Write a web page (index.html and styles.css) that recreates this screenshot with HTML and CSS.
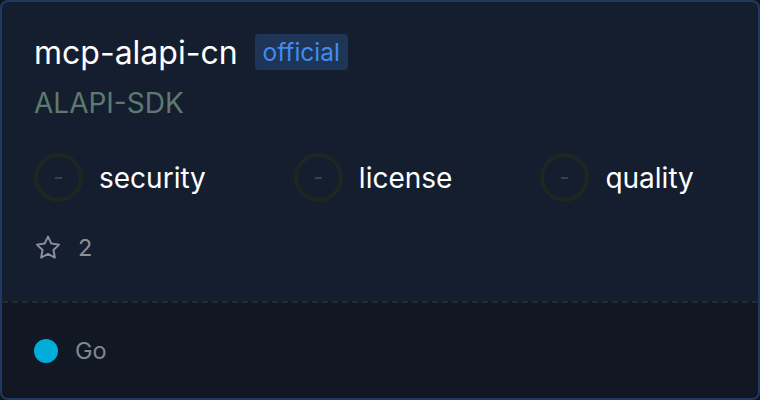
FILE: index.html
```html
<!DOCTYPE html>
<html lang="en">
  <head>
    <meta charset="UTF-8" />
    <meta name="viewport" content="width=device-width, initial-scale=1.0" />
    <title>mcp-alapi-cn</title>
    <link rel="stylesheet" href="styles.css">
  </head>
  <body>
    <div class="card">
      <div class="card-main">
        <div class="title-row">
          <h1 class="title">mcp-alapi-cn</h1>
          <span class="badge">official</span>
        </div>
        <div class="owner">ALAPI-SDK</div>

        <div class="scores">
          <div class="score">
            <span class="ring"><span class="dash"></span></span>
            <span class="score-label">security</span>
          </div>
          <div class="score">
            <span class="ring"><span class="dash"></span></span>
            <span class="score-label">license</span>
          </div>
          <div class="score">
            <span class="ring"><span class="dash"></span></span>
            <span class="score-label">quality</span>
          </div>
        </div>

        <div class="stars">
          <svg class="star-icon" width="28" height="28" viewBox="0 0 24 24" fill="none" stroke="currentColor" stroke-width="1.7" stroke-linejoin="round">
            <path d="M12 2.2l2.9 6 6.6.9-4.8 4.6 1.2 6.5L12 17.1l-5.9 3.1 1.2-6.5-4.8-4.6 6.6-.9z" />
          </svg>
          <span class="star-count">2</span>
        </div>
      </div>

      <div class="card-footer">
        <span class="lang-dot"></span>
        <span class="lang-name">Go</span>
      </div>
    </div>
  </body>
</html>
```

FILE: styles.css
```css
body {
  margin: 0;
  padding: 0;
  background: #0f1623;
  font-family: Inter, "Noto Sans", sans-serif;
}
.card {
  box-sizing: border-box;
  width: 760px;
  height: 400px;
  border: 2px solid #1f3a60;
  border-radius: 8px;
  background: #151e2f;
  display: flex;
  flex-direction: column;
  overflow: hidden;
}
.card-main {
  flex: 1;
  padding: 32px 32px 0;
}
.title-row {
  display: flex;
  align-items: center;
  gap: 17px;
  height: 36px;
}
.title {
  margin: 0;
  font-size: 32px;
  font-weight: 400;
  color: #ffffff;
}
.badge {
  background: #1f3558;
  color: #3f8cf0;
  font-size: 24.5px;
  line-height: 36px;
  padding: 0 8px;
  border-radius: 4px;
}
.owner {
  margin-top: 16px;
  font-size: 28px;
  line-height: 34px;
  color: #5d7a70;
}
.scores {
  display: flex;
  gap: 88px;
  margin-top: 33px;
}
.score {
  display: flex;
  align-items: center;
  gap: 16px;
}
.ring {
  box-sizing: border-box;
  width: 49px;
  height: 49px;
  border: 4px solid #1d2620;
  border-radius: 50%;
  display: flex;
  align-items: center;
  justify-content: center;
}
.dash {
  width: 7px;
  height: 2px;
  background: #3b4046;
}
.score-label {
  font-size: 28px;
  color: #ffffff;
}
.stars {
  display: flex;
  align-items: center;
  gap: 16px;
  margin-top: 31px;
  color: #8a8f98;
}
.star-count {
  font-size: 23.5px;
}
.card-footer {
  height: 95px;
  border-top: 2px dashed #232b2e;
  background: #111723;
  display: flex;
  align-items: center;
  gap: 17px;
  padding: 0 32px;
}
.lang-dot {
  width: 24px;
  height: 24px;
  border-radius: 50%;
  background: #00add8;
}
.lang-name {
  font-size: 23.5px;
  color: #80858e;
}
```
